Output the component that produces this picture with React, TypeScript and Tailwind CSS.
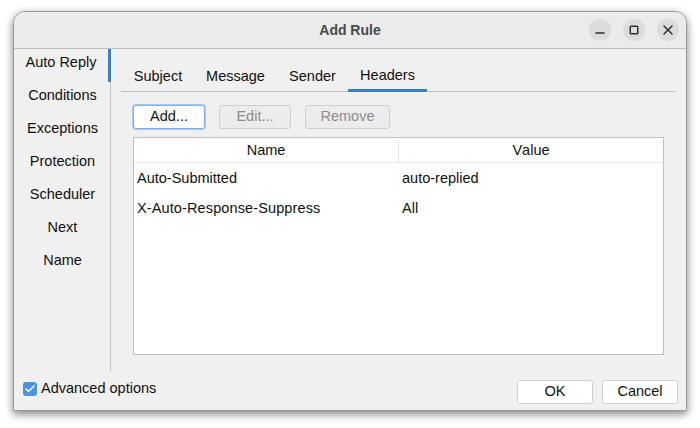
import { Check, Minus, Square, X } from "lucide-react";

const sections = ["Auto Reply", "Conditions", "Exceptions", "Protection", "Scheduler", "Next", "Name"];
const tabs = [
  { name: "Subject", w: "w-[72px]" },
  { name: "Message", w: "w-[83px]" },
  { name: "Sender", w: "w-[71px]" },
  { name: "Headers", w: "w-[79px]" },
];
const rows = [
  { name: "Auto-Submitted", value: "auto-replied", cls: "" },
  { name: "X-Auto-Response-Suppress", value: "All", cls: "tracking-[0.12px]" },
];

function WinButton({ children }: { children: React.ReactNode }) {
  return (
    <div className="w-[22px] h-[22px] rounded-full bg-[#dcdcdc] flex items-center justify-center text-[#2e2e2e]">
      {children}
    </div>
  );
}

export default function App() {
  return (
    <div className="w-[700px] h-[428px] bg-white pt-[11px] pl-[13px] overflow-hidden font-['Liberation_Sans',Arial,sans-serif] text-[14.5px] text-[#111111] [font-kerning:none]">
      <div className="w-[674px] h-[400px] flex flex-col bg-[#f0f0f0] border border-[#9a9a9a] rounded-t-[12px] shadow-[0_3px_9px_rgba(0,0,0,0.5)] overflow-hidden">
        <div className="h-[37px] shrink-0 relative flex items-center justify-center bg-[#ebebeb] border-b border-[#bdbdbd]">
          <span className="font-bold text-[14px] text-[#4a4a4a] mt-[1px]">Add Rule</span>
          <div className="absolute right-[7px] top-[7px] flex gap-[12px]">
            <WinButton><Minus size={14} className="mt-[6px]" strokeWidth={1.5} absoluteStrokeWidth /></WinButton>
            <WinButton><Square size={10} strokeWidth={1.5} absoluteStrokeWidth /></WinButton>
            <WinButton><X size={16} strokeWidth={1.5} absoluteStrokeWidth /></WinButton>
          </div>
        </div>

        <div className="h-[322px] flex">
          <div className="w-[97px] shrink-0 border-r border-[#c0c0c0]">
            {sections.map((s, i) => (
              <div
                key={s}
                className={`h-[33px] flex items-center justify-center pb-[5px] -mr-px ${
                  i === 0 ? "border-r-[3px] border-[#3d7fc4]" : ""
                }`}
              >
                {s}
              </div>
            ))}
          </div>

          <div className="flex-1 pl-[10px] pr-[10px]">
            <div className="h-[43px] flex items-end border-b border-[#c0c0c0] pl-[1px]">
              {tabs.map((t) => (
                <div
                  key={t.name}
                  className={`${t.w} h-[30px] flex items-center justify-center -mb-px ${
                    t.name === "Headers" ? "border-b-[3px] border-[#3d7fc4]" : ""
                  }`}
                >
                  {t.name}
                </div>
              ))}
            </div>

            <div className="ml-[12px] mt-[13px] w-[531px]">
              <div className="flex gap-[14px] h-[24px]">
                <button className="w-[72px] h-[24px] rounded-[3px] bg-white border border-[#7fb0e8] ring-1 ring-[#a9c9ec] text-[#111111]">Add...</button>
                <button className="w-[72px] h-[24px] rounded-[3px] bg-[#ececec] border border-[#cfcfcf] text-[#8c8c8c]">Edit...</button>
                <button className="w-[85px] h-[24px] rounded-[3px] bg-[#ececec] border border-[#cfcfcf] text-[#8c8c8c]">Remove</button>
              </div>

              <div className="mt-[8px] h-[218px] bg-white border border-[#c0c0c0]">
                <div className="h-[25px] flex border-b border-[#e6e6e6] pt-[1px]">
                  <div className="w-[265px] flex items-center justify-center border-r border-[#e6e6e6]">Name</div>
                  <div className="flex-1 flex items-center justify-center">Value</div>
                </div>
                <div className="pt-[1px]">
                  {rows.map((r) => (
                    <div key={r.name} className="h-[30px] flex items-center">
                      <div className={`w-[265px] pl-[3px] ${r.cls}`}>{r.name}</div>
                      <div className="pl-[3px]">{r.value}</div>
                    </div>
                  ))}
                </div>
              </div>
            </div>
          </div>
        </div>

        <div className="flex-1 flex items-start justify-between pl-[9px] pr-[8px] pt-[9px]">
          <label className="flex items-center gap-[4px] -mt-[2px]">
            <span className="w-[14px] h-[14px] rounded-[3px] bg-[#4a94e0] flex items-center justify-center">
              <Check size={12} strokeWidth={3} className="text-white" />
            </span>
            Advanced options
          </label>
          <div className="flex gap-[9px]">
            <button className="w-[76px] h-[24px] rounded-[3px] bg-white border border-[#cfcfcf]">OK</button>
            <button className="w-[76px] h-[24px] rounded-[3px] bg-white border border-[#cfcfcf]">Cancel</button>
          </div>
        </div>
      </div>
    </div>
  );
}
